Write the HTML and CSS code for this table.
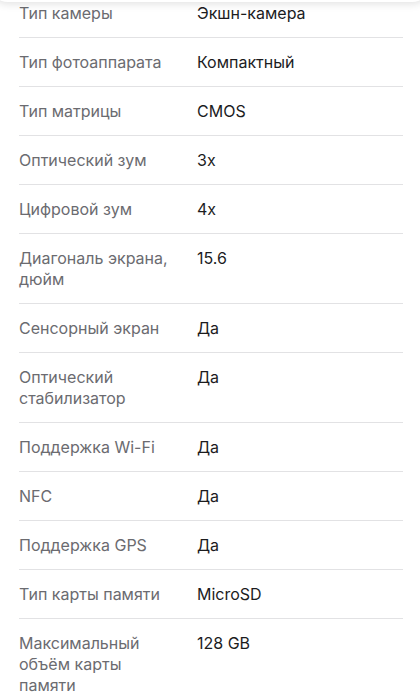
FILE: index.html
```html
<!DOCTYPE html>
<html lang="ru">
<head>
  <meta charset="UTF-8">
  <meta name="viewport" content="width=device-width, initial-scale=1.0">
  <title>Характеристики</title>
  <link rel="stylesheet" href="styles.css">
</head>
<body>
  <div class="top-bar"></div>

  <div class="specs">
    <div class="spec-row">
      <div class="spec-name">Тип камеры</div>
      <div class="spec-value">Экшн-камера</div>
    </div>
    <div class="spec-row">
      <div class="spec-name">Тип фотоаппарата</div>
      <div class="spec-value">Компактный</div>
    </div>
    <div class="spec-row">
      <div class="spec-name">Тип матрицы</div>
      <div class="spec-value">CMOS</div>
    </div>
    <div class="spec-row">
      <div class="spec-name">Оптический зум</div>
      <div class="spec-value">3x</div>
    </div>
    <div class="spec-row">
      <div class="spec-name">Цифровой зум</div>
      <div class="spec-value">4x</div>
    </div>
    <div class="spec-row">
      <div class="spec-name">Диагональ экрана, дюйм</div>
      <div class="spec-value">15.6</div>
    </div>
    <div class="spec-row">
      <div class="spec-name">Сенсорный экран</div>
      <div class="spec-value">Да</div>
    </div>
    <div class="spec-row">
      <div class="spec-name">Оптический стабилизатор</div>
      <div class="spec-value">Да</div>
    </div>
    <div class="spec-row">
      <div class="spec-name">Поддержка Wi-Fi</div>
      <div class="spec-value">Да</div>
    </div>
    <div class="spec-row">
      <div class="spec-name">NFC</div>
      <div class="spec-value">Да</div>
    </div>
    <div class="spec-row">
      <div class="spec-name">Поддержка GPS</div>
      <div class="spec-value">Да</div>
    </div>
    <div class="spec-row">
      <div class="spec-name">Тип карты памяти</div>
      <div class="spec-value">MicroSD</div>
    </div>
    <div class="spec-row">
      <div class="spec-name">Максимальный объём карты памяти</div>
      <div class="spec-value">128 GB</div>
    </div>
  </div>
</body>
</html>
```

FILE: styles.css
```css
body {
  font-family: "Inter", "Liberation Sans", Arial, sans-serif;
  background-color: #fff;
  margin: 0;
  overflow: hidden;
}
.top-bar {
  position: fixed;
  top: -40px;
  left: -10px;
  right: -10px;
  height: 42px;
  background: #fff;
  border-radius: 0 0 18px 18px;
  box-shadow: 0 2px 8px rgba(0,0,0,0.12);
  z-index: 2;
}
.specs {
  margin: -11px 17px 0 19px;
}
.spec-row {
  display: grid;
  grid-template-columns: 162px 1fr;
  column-gap: 16px;
  padding: 14px 0 13px;
  border-bottom: 1px solid #e2e2e4;
  font-size: 16px;
  line-height: 21px;
}
.spec-name {
  color: #6b6b70;
}
.spec-value {
  color: #1c1c1e;
}
```
